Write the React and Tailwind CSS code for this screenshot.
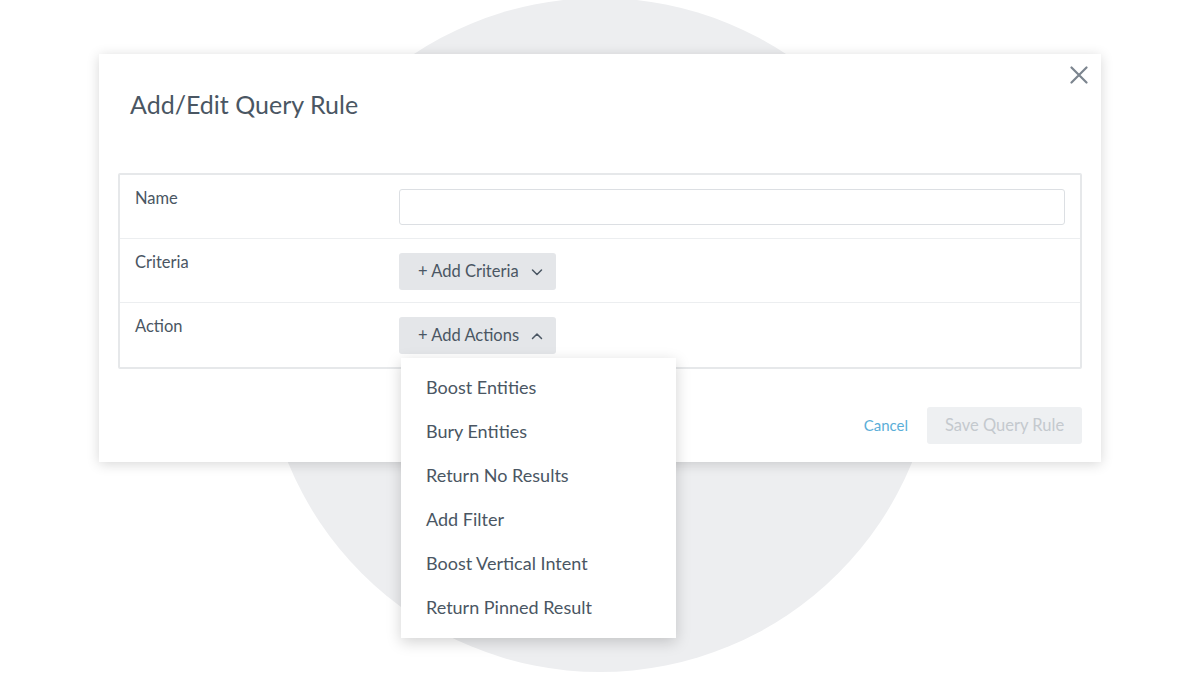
const actions = [
  "Boost Entities",
  "Bury Entities",
  "Return No Results",
  "Add Filter",
  "Boost Vertical Intent",
  "Return Pinned Result",
];

const Chevron = ({ up }) => (
  <svg width="12" height="8" viewBox="0 0 12 8" className="ml-[12px]">
    <path
      d={up ? "M1.5 6.5 L6 2 L10.5 6.5" : "M1.5 2 L6 6.5 L10.5 2"}
      fill="none"
      stroke="#4a5663"
      strokeWidth="1.5"
      strokeLinecap="round"
      strokeLinejoin="round"
    />
  </svg>
);

const Row = ({ label, children, last }) => (
  <div
    className={`flex items-start h-[64px] ${last ? "" : "border-b border-[#eceef0]"}`}
  >
    <div className="w-[279px] pl-[15px] pt-[11px] text-[16.5px] leading-[24px] text-[#4a5663]">
      {label}
    </div>
    <div className="flex-1 pr-[15px] pt-[14px]">{children}</div>
  </div>
);

export default function App() {
  return (
    <div
      className="relative w-[1200px] h-[675px] overflow-hidden bg-white"
      style={{ fontFamily: "Lato, 'Open Sans', sans-serif" }}
    >
      {/* background circle */}
      <div className="absolute left-[263px] top-[-2px] w-[674px] h-[674px] rounded-full bg-[#edeef0]" />

      <div className="relative pt-[54px] pl-[99px]">
        {/* Modal */}
        <div className="relative w-[1002px] h-[408px] bg-white shadow-[0_2px_12px_rgba(0,0,0,0.16)]">
          <button className="absolute right-[13px] top-[12px] w-[18px] h-[18px]">
            <svg width="18" height="18" viewBox="0 0 18 18">
              <path
                d="M1.5 1.5 L16.5 16.5 M16.5 1.5 L1.5 16.5"
                stroke="#7c858f"
                strokeWidth="2.2"
                strokeLinecap="round"
              />
            </svg>
          </button>

          <h1 className="pt-[34px] pl-[31px] text-[25px] leading-[32px] text-[#4a5663] font-normal">
            Add/Edit Query Rule
          </h1>

          <div className="mt-[53px] mx-[19px] border-2 border-[#e6e8ea] rounded-[2px]">
            <Row label="Name">
              <div className="h-[36px] rounded-[3px] border border-[#dcdfe3] bg-white" />
            </Row>
            <Row label="Criteria">
              <button className="flex items-center h-[37px] w-[157px] pl-[19px] rounded-[3px] bg-[#e4e6e9] text-[16.5px] text-[#4a5663]">
                + Add Criteria
                <Chevron />
              </button>
            </Row>
            <Row label="Action" last>
              <button className="flex items-center h-[37px] w-[157px] pl-[19px] rounded-[3px] bg-[#e4e6e9] text-[16.5px] text-[#4a5663]">
                + Add Actions
                <Chevron up />
              </button>
            </Row>
          </div>

          <div className="flex justify-end items-center gap-[19px] mt-[38px] pr-[19px]">
            <span className="text-[15px] text-[#5aaed8]">Cancel</span>
            <button className="h-[37px] w-[155px] rounded-[3px] bg-[#eef0f2] text-[16.5px] text-[#c4c9ce]">
              Save Query Rule
            </button>
          </div>
        </div>

        {/* Actions dropdown menu */}
        <div className="absolute left-[401px] top-[358px] w-[275px] pt-[7px] pb-[9px] bg-white shadow-[0_4px_14px_rgba(0,0,0,0.18)]">
          {actions.map((a) => (
            <div
              key={a}
              className="h-[44px] flex items-center pl-[25px] text-[18px] text-[#4a5663]"
            >
              {a}
            </div>
          ))}
        </div>
      </div>
    </div>
  );
}
